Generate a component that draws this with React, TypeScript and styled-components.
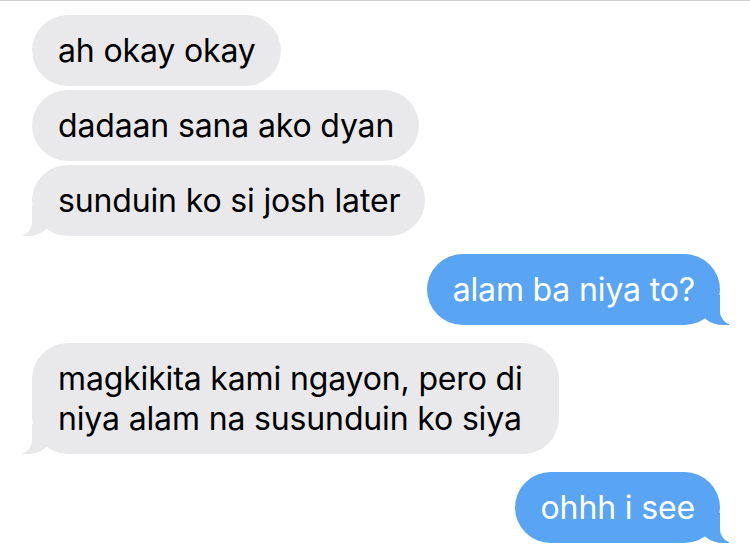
import { createGlobalStyle, styled } from "styled-components";

const GlobalStyle = createGlobalStyle`
  html, body {
    margin: 0;
    background: #ffffff;
  }
  body {
    font-family: Inter, "Noto Sans", "Liberation Sans", sans-serif;
  }
`;

const Screen = styled.div`
  width: 750px;
  height: 558px;
  overflow: hidden;
  border-top: 1px solid #cfcfd3;
  box-sizing: border-box;
  padding: 14px 30px 0 32px;
  display: flex;
  flex-direction: column;
`;

const Group = styled.div<{ $mine?: boolean }>`
  display: flex;
  flex-direction: column;
  align-items: ${(p) => (p.$mine ? "flex-end" : "flex-start")};
  gap: 4px;
  margin-bottom: 18px;
`;

const Bubble = styled.div<{ $mine?: boolean; $tail?: boolean }>`
  position: relative;
  max-width: 476px;
  padding: 15.5px 25px 15.5px 26px;
  border-radius: 36px;
  font-size: 32px;
  line-height: 40px;
  letter-spacing: -0.15px;
  color: ${(p) => (p.$mine ? "#ffffff" : "#000000")};
  background: ${(p) => (p.$mine ? "#5aa4f4" : "#e9e9eb")};

  ${(p) =>
    p.$tail &&
    `
    &::before {
      content: "";
      position: absolute;
      bottom: 0;
      ${p.$mine ? "right: -9px;" : "left: -10px;"}
      width: 30px;
      height: 30px;
      background: ${p.$mine ? "#5aa4f4" : "#e9e9eb"};
      ${p.$mine ? "border-bottom-left-radius: 24px 20px;" : "border-bottom-right-radius: 24px 20px;"}
    }
    &::after {
      content: "";
      position: absolute;
      bottom: 0;
      ${p.$mine ? "right: -36px;" : "left: -36px;"}
      width: 36px;
      height: 30px;
      background: #ffffff;
      ${p.$mine ? "border-bottom-left-radius: 14px;" : "border-bottom-right-radius: 14px;"}
    }
  `}
`;

type Msg = { text: string; mine: boolean };

const groups: Msg[][] = [
  [
    { text: "ah okay okay", mine: false },
    { text: "dadaan sana ako dyan", mine: false },
    { text: "sunduin ko si josh later", mine: false },
  ],
  [{ text: "alam ba niya to?", mine: true }],
  [
    {
      text: "magkikita kami ngayon, pero di niya alam na susunduin ko siya",
      mine: false,
    },
  ],
  [{ text: "ohhh i see", mine: true }],
];

export default function App() {
  return (
    <>
      <GlobalStyle />
      <Screen>
        {groups.map((g, gi) => (
          <Group key={gi} $mine={g[0].mine}>
            {g.map((m, i) => (
              <Bubble key={i} $mine={m.mine} $tail={i === g.length - 1}>
                {m.text}
              </Bubble>
            ))}
          </Group>
        ))}
      </Screen>
    </>
  );
}
